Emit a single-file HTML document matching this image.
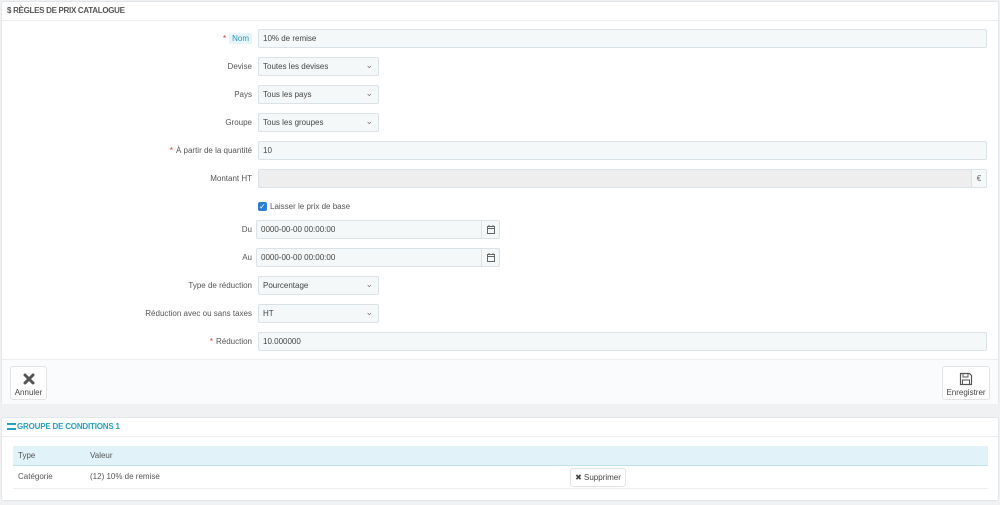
<!DOCTYPE html>
<html><head><meta charset="utf-8"><style>
*{box-sizing:border-box;margin:0;padding:0}
body{width:1000px;height:505px;background:#eff1f2;font-family:"Liberation Sans",sans-serif;font-size:8px;color:#555;position:relative;overflow:hidden}
.abs{position:absolute}
.panel{position:absolute;background:#fff;border:1px solid #e3e6e8;border-radius:3px}
.lbl{position:absolute;right:748px;text-align:right;color:#555;font-size:8px;line-height:20px;white-space:nowrap}
.star{color:#e0301e;margin-right:3px}
.inp{position:absolute;height:19px;background:#f5f8f9;border:1px solid #d9e2e6;border-radius:2px;line-height:18px;padding-left:4px;color:#444;font-size:8px}
.sel:after{content:"⌄";position:absolute;right:5px;top:-2px;font-size:9px;color:#777}
.cal{position:absolute;right:0;top:0;width:18px;height:17px;border-left:1px solid #d9e2e6}
.btn{position:absolute;background:#fff;border:1px solid #e1e4e6;border-radius:3px;text-align:center;font-size:8px;color:#444}
</style></head><body>

<div class="panel" style="left:1px;top:1px;width:998px;height:403px">
  <div class="abs" style="left:0;top:0;width:996px;height:19px;border-bottom:1px solid #eceff0;padding-left:5px;line-height:18px;font-size:8px;font-weight:bold;color:#555;letter-spacing:-0.3px">$ RÈGLES DE PRIX CATALOGUE</div>
  <div class="abs" style="left:0;top:357px;width:996px;height:45px;background:#fafbfc;border-top:1px solid #eceff0"></div>
</div>

<div class="lbl" style="top:29px"><span class="star">*</span><span style="background:#e6f5fa;color:#2594b8;padding:1px 3px">Nom</span></div>
<div class="inp" style="left:258px;top:29px;width:729px">10% de remise</div>

<div class="lbl" style="top:57px">Devise</div>
<div class="inp sel" style="left:258px;top:57px;width:121px">Toutes les devises</div>
<div class="lbl" style="top:85px">Pays</div>
<div class="inp sel" style="left:258px;top:85px;width:121px">Tous les pays</div>
<div class="lbl" style="top:113px">Groupe</div>
<div class="inp sel" style="left:258px;top:113px;width:121px">Tous les groupes</div>

<div class="lbl" style="top:141px"><span class="star">*</span>À partir de la quantité</div>
<div class="inp" style="left:258px;top:141px;width:729px">10</div>

<div class="lbl" style="top:169px">Montant HT</div>
<div class="inp" style="left:258px;top:169px;width:729px;background:#eeeeee"><div class="cal" style="width:15px;background:#f5f8f9;text-align:center;color:#666">€</div></div>

<div class="abs" style="left:258px;top:202px;width:9px;height:9px;background:#2a7fd4;border-radius:2px;color:#fff;font-size:8px;line-height:9px;text-align:center">✓</div>
<div class="abs" style="left:270px;top:201px;line-height:11px;color:#555">Laisser le prix de base</div>

<div class="lbl" style="top:220px">Du</div>
<div class="inp" style="left:256px;top:220px;width:244px">0000-00-00 00:00:00<div class="cal"><svg width="18" height="17" viewBox="0 0 18 17"><rect x="5.5" y="5.5" width="7" height="7" fill="none" stroke="#666"/><line x1="5.5" y1="7.5" x2="12.5" y2="7.5" stroke="#666"/><line x1="7" y1="4" x2="7" y2="6" stroke="#666"/><line x1="11" y1="4" x2="11" y2="6" stroke="#666"/></svg></div></div>
<div class="lbl" style="top:248px">Au</div>
<div class="inp" style="left:256px;top:248px;width:244px">0000-00-00 00:00:00<div class="cal"><svg width="18" height="17" viewBox="0 0 18 17"><rect x="5.5" y="5.5" width="7" height="7" fill="none" stroke="#666"/><line x1="5.5" y1="7.5" x2="12.5" y2="7.5" stroke="#666"/><line x1="7" y1="4" x2="7" y2="6" stroke="#666"/><line x1="11" y1="4" x2="11" y2="6" stroke="#666"/></svg></div></div>

<div class="lbl" style="top:276px">Type de réduction</div>
<div class="inp sel" style="left:258px;top:276px;width:121px">Pourcentage</div>
<div class="lbl" style="top:304px">Réduction avec ou sans taxes</div>
<div class="inp sel" style="left:258px;top:304px;width:121px">HT</div>
<div class="lbl" style="top:332px"><span class="star">*</span>Réduction</div>
<div class="inp" style="left:258px;top:332px;width:729px">10.000000</div>

<div class="btn" style="left:10px;top:366px;width:37px;height:34px">
  <svg width="14" height="14" viewBox="0 0 14 14" style="margin-top:5px"><path d="M3 3L11 11M11 3L3 11" stroke="#555" stroke-width="3" stroke-linecap="round"/></svg>
  <div style="line-height:10px">Annuler</div></div>
<div class="btn" style="left:942px;top:366px;width:48px;height:34px">
  <svg width="14" height="14" viewBox="0 0 14 14" style="margin-top:5px"><path d="M1.5 1.5H10.5L12.5 3.5V12.5H1.5Z" fill="none" stroke="#555" stroke-width="1.2"/><rect x="4" y="1.5" width="5" height="3.5" fill="none" stroke="#555"/><rect x="3.5" y="8" width="7" height="4.5" fill="none" stroke="#555"/></svg>
  <div style="line-height:10px">Enregistrer</div></div>

<div class="panel" style="left:1px;top:417px;width:998px;height:84px">
  <div class="abs" style="left:0;top:0;width:996px;height:19px;border-bottom:1px solid #eceff0;padding-left:5px;line-height:18px;font-weight:bold;color:#25a0c5;font-size:8px;letter-spacing:-0.2px">
    <span style="display:inline-block;width:9px;height:7px;border-top:2px solid #25a0c5;border-bottom:2px solid #25a0c5;vertical-align:-1px;margin-right:1px"></span>GROUPE DE CONDITIONS 1</div>
  <div class="abs" style="left:11px;top:28px;width:975px;height:20px;background:#e1f3f9;border-bottom:1px solid #bfe3ee"></div>
  <div class="abs" style="left:16px;top:28px;line-height:20px">Type</div>
  <div class="abs" style="left:88px;top:28px;line-height:20px">Valeur</div>
  <div class="abs" style="left:11px;top:70px;width:975px;height:1px;background:#eceff0"></div>
  <div class="abs" style="left:16px;top:49px;line-height:20px">Catégorie</div>
  <div class="abs" style="left:88px;top:49px;line-height:20px">(12) 10% de remise</div>
  <div class="btn" style="left:568px;top:50px;width:56px;height:19px;line-height:17px;color:#444">✖ Supprimer</div>
</div>
</body></html>
